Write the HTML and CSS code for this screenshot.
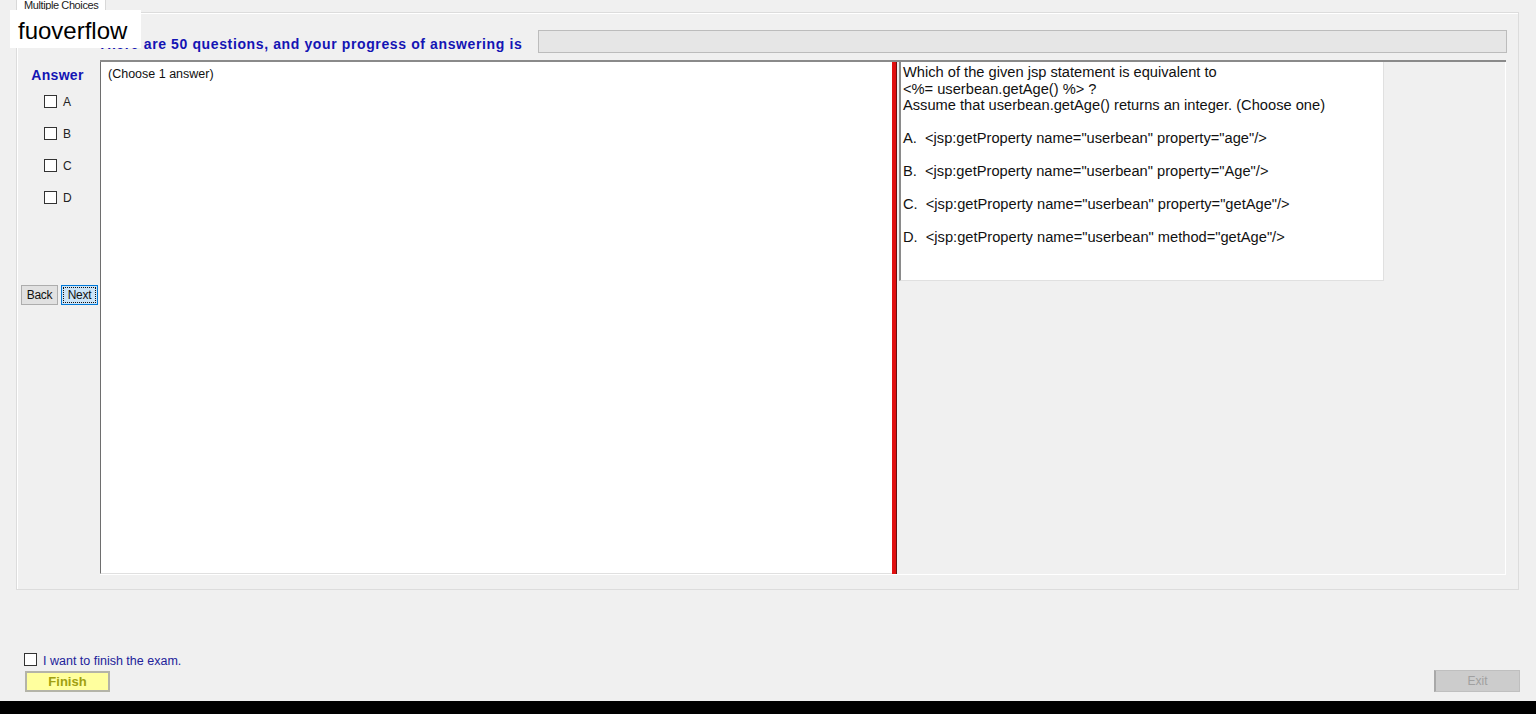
FILE: index.html
```html
<!DOCTYPE html>
<html>
<head>
<meta charset="utf-8">
<link rel="stylesheet" href="styles.css">
</head>
<body>
<div class="watermark">fuoverflow</div>
<div class="tabstrip"><div class="tab">Multiple Choices</div></div>
<div class="tabpage">
  <div class="header">
    <div class="title">There are 50 questions, and your progress of answering is</div>
    <div class="progress"></div>
  </div>
  <div class="content">
    <div class="sidebar">
      <div class="answer">Answer</div>
      <div class="opts">
        <label class="opt"><span class="box"></span>A</label>
        <label class="opt"><span class="box"></span>B</label>
        <label class="opt"><span class="box"></span>C</label>
        <label class="opt"><span class="box"></span>D</label>
      </div>
      <div class="navbtns">
        <div class="btn">Back</div>
        <div class="btn next">Next</div>
      </div>
    </div>
    <div class="main">
      <div class="answerbox">(Choose 1 answer)</div>
      <div class="splitter"></div>
      <div class="right">
        <div class="question">
          <div>Which of the given jsp statement is equivalent to</div>
          <div>&lt;%= userbean.getAge() %&gt; ?</div>
          <div>Assume that userbean.getAge() returns an integer. (Choose one)</div>
          <div class="blank"></div>
          <div>A.&nbsp; &lt;jsp:getProperty name="userbean" property="age"/&gt;</div>
          <div class="blank"></div>
          <div>B.&nbsp; &lt;jsp:getProperty name="userbean" property="Age"/&gt;</div>
          <div class="blank"></div>
          <div>C.&nbsp; &lt;jsp:getProperty name="userbean" property="getAge"/&gt;</div>
          <div class="blank"></div>
          <div>D.&nbsp; &lt;jsp:getProperty name="userbean" method="getAge"/&gt;</div>
        </div>
      </div>
    </div>
  </div>
</div>
<div class="footer">
  <div class="finisharea">
    <label class="finishchk"><span class="box"></span>I want to finish the exam.</label>
    <div class="finish">Finish</div>
  </div>
  <div class="exit">Exit</div>
</div>
<div class="blackbar"></div>
</body>
</html>
```
FILE: styles.css
```css
html, body {
  margin: 0;
  padding: 0;
}
body {
  width: 1536px;
  height: 714px;
  overflow: hidden;
  background: #f0f0f0;
  font-family: "Liberation Sans", Arial, sans-serif;
  display: flex;
  flex-direction: column;
  position: relative;
}
.watermark {
  position: absolute;
  left: 10px;
  top: 10px;
  width: 131px;
  height: 38px;
  background: #fff;
  font-size: 24px;
  line-height: 42px;
  padding-left: 8px;
  box-sizing: border-box;
  color: #000;
  z-index: 5;
}
.tabstrip {
  height: 12px;
  padding-left: 16px;
  display: flex;
  align-items: flex-end;
}
.tab {
  height: 13px;
  width: 90px;
  box-sizing: border-box;
  border: 1px solid #d8d8d8;
  border-bottom: none;
  background: #fff;
  font-size: 11px;
  line-height: 10px;
  color: #222;
  padding-left: 7px;
  letter-spacing: -0.4px;
  overflow: hidden;
  white-space: nowrap;
}
.tabpage {
  margin-left: 16px;
  width: 1503px;
  height: 578px;
  box-sizing: border-box;
  border: 1px solid #dcdcdc;
  box-shadow: inset 1px 1px 0 #fff;
  display: flex;
  flex-direction: column;
}
.header {
  margin-top: 16px;
  height: 24px;
  display: flex;
  align-items: flex-end;
}
.title {
  margin-left: 81px;
  font-size: 14px;
  font-weight: bold;
  letter-spacing: 0.62px;
  color: #1414b4;
  line-height: 16px;
  padding-bottom: 1px;
  white-space: nowrap;
}
.progress {
  margin-left: auto;
  margin-right: 11px;
  width: 969px;
  height: 23px;
  box-sizing: border-box;
  background: #e6e6e6;
  border: 1px solid #bcbcbc;
}
.content {
  margin-top: 7px;
  height: 515px;
  display: flex;
}
.sidebar {
  width: 83px;
  display: flex;
  flex-direction: column;
}
.answer {
  margin-top: 7px;
  text-align: center;
  font-size: 14px;
  font-weight: bold;
  letter-spacing: 0.3px;
  color: #1414b4;
  line-height: 16px;
  padding-right: 2px;
}
.opts {
  margin-top: 12px;
  display: flex;
  flex-direction: column;
  gap: 19px;
  padding-left: 27px;
}
.opt {
  display: flex;
  align-items: center;
  font-size: 12px;
  color: #222;
  height: 13px;
}
.box {
  display: inline-block;
  width: 13px;
  height: 13px;
  box-sizing: border-box;
  border: 1px solid #333;
  background: #fff;
  margin-right: 6px;
}
.navbtns {
  margin-top: 81px;
  display: flex;
  gap: 3px;
  padding-left: 4px;
}
.btn {
  width: 37px;
  height: 20px;
  box-sizing: border-box;
  border: 1px solid #adadad;
  background: #e1e1e1;
  font-size: 12px;
  line-height: 18px;
  text-align: center;
  color: #111;
  letter-spacing: -0.3px;
}
.btn.next {
  background: #cce4f7;
  border: 1px solid #0078d7;
  outline: 1px dotted #111;
  outline-offset: -3px;
}
.main {
  width: 1406px;
  display: flex;
  border-top: 2px solid #8a8a8a;
  border-bottom: 1px solid #fff;
  box-sizing: border-box;
}
.answerbox {
  width: 792px;
  background: #fff;
  border-left: 1px solid #6e6e6e;
  border-bottom: 1px solid #e0e0e0;
  box-sizing: border-box;
  font-size: 12.5px;
  padding: 5px 0 0 7px;
  color: #111;
}
.splitter {
  width: 5px;
  background: #e01010;
  border-right: 1px solid #6a1010;
  box-sizing: border-box;
}
.right {
  flex: 1;
  padding-left: 2px;
  border-right: 1px solid #fff;
}
.question {
  width: 485px;
  height: 219px;
  box-sizing: border-box;
  background: #fff;
  border-left: 2px solid #8a8a8a;
  border-right: 1px solid #e0e0e0;
  border-bottom: 1px solid #e0e0e0;
  padding: 2px 0 0 2px;
  font-size: 14.67px;
  line-height: 16.5px;
  color: #111;
  white-space: nowrap;
}
.blank {
  height: 16.5px;
}
.footer {
  flex: 1;
  display: flex;
  align-items: flex-end;
  justify-content: space-between;
  padding: 0 16px 9px 24px;
}
.finisharea {
  display: flex;
  flex-direction: column;
  gap: 3px;
}
.finishchk {
  display: flex;
  align-items: center;
  font-size: 12.5px;
  color: #22229a;
  height: 14px;
  line-height: 14px;
}
.finishchk .box {
  margin-right: 6px;
  margin-top: -4px;
}
.finish {
  margin-left: 1px;
  width: 85px;
  height: 21px;
  box-sizing: border-box;
  border: 2px solid #b4b4a8;
  background: #ffff9e;
  color: #a0a010;
  font-weight: bold;
  font-size: 13px;
  line-height: 17px;
  text-align: center;
}
.exit {
  width: 86px;
  height: 22px;
  margin-bottom: 0;
  box-sizing: border-box;
  border: 1px solid #bfbfbf;
  border-left: 2px solid #a8a8a8;
  background: #cccccc;
  color: #a0a0a0;
  font-size: 12px;
  line-height: 21px;
  text-align: center;
}
.blackbar {
  height: 13px;
  background: #000;
  flex-shrink: 0;
}
```
